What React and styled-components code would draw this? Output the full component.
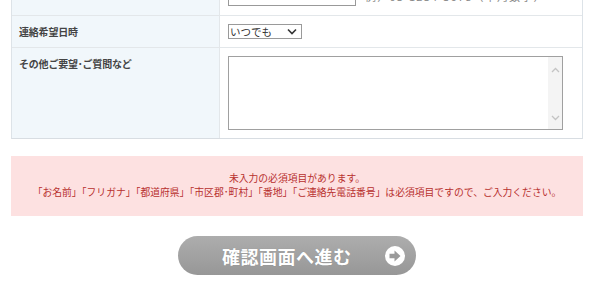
import styled, { createGlobalStyle } from 'styled-components';

const GlobalStyle = createGlobalStyle`
  html, body {
    margin: 0;
    padding: 0;
    background: #fff;
    overflow: hidden;
  }
  body {
    font-family: "Noto Sans CJK JP", "Noto Sans", sans-serif;
    color: #333;
  }
`;

const Page = styled.div`
  padding: 0 17px 0 11px;
  width: 572px;
`;

const FormTable = styled.div`
  margin-top: -26px;
  border: 1px solid #dde3e8;
  border-bottom-color: #d8dde2;
`;

const Row = styled.div`
  display: grid;
  grid-template-columns: 208px 1fr;
  border-top: ${(p) => (p.$first ? 'none' : '1px solid #e3e7ea')};
  min-height: ${(p) => p.$height || 31}px;
`;

const Label = styled.div`
  background: #f1f7fb;
  border-right: 1px solid #e3e7ea;
  padding: ${(p) => (p.$top ? '8px 7px' : '0 7px')};
  display: flex;
  align-items: ${(p) => (p.$top ? 'flex-start' : 'center')};
  font-size: 10px;
  font-weight: bold;
  color: #444;
  letter-spacing: -0.2px;
`;

const Cell = styled.div`
  background: #fff;
  padding: ${(p) => p.$pad || '8px'};
  display: flex;
  align-items: center;
  gap: 9px;
`;

const TextInput = styled.input`
  width: 128px;
  height: 20px;
  box-sizing: border-box;
  border: 1px solid #999;
  margin: 1px 0 0;
`;

const Note = styled.span`
  font-size: 11px;
  letter-spacing: 1.2px;
  color: #888;
  margin-top: 1px;
`;

const SelectWrap = styled.div`
  position: relative;
  width: 74px;
  height: 15px;
`;

const Select = styled.select`
  display: block;
  appearance: none;
  width: 100%;
  height: 15px;
  box-sizing: border-box;
  border: 1px solid #9a9a9a;
  background: #fff;
  font-family: "Noto Sans CJK JP", sans-serif;
  font-size: 10.5px;
  line-height: 13px;
  padding: 0 1px;
  margin: 0;
  color: #333;
  border-radius: 0;
`;

const Chevron = styled.svg`
  position: absolute;
  right: 5px;
  top: 4px;
  pointer-events: none;
`;

const AreaWrap = styled.div`
  position: relative;
  width: 335px;
  height: 74px;
`;

const TextArea = styled.textarea`
  display: block;
  width: 100%;
  height: 100%;
  box-sizing: border-box;
  border: 1px solid #a0a0a0;
  resize: none;
  overflow: hidden;
  margin: 0;
`;

const ScrollBar = styled.div`
  position: absolute;
  right: 1px;
  top: 1px;
  bottom: 1px;
  width: 14px;
  background: #f4f4f4;
  display: flex;
  flex-direction: column;
  justify-content: space-between;
  align-items: center;
  padding: 10px 0 8px;
  box-sizing: border-box;
`;

const ErrorBox = styled.div`
  margin-top: 17px;
  background: #fde1e1;
  padding: 15px 0 17px;
  text-align: center;
  font-size: 9.8px;
  line-height: 14px;
  color: #b8302e;
`;

const ButtonRow = styled.div`
  display: flex;
  justify-content: center;
  margin-top: 20px;
`;

const NextButton = styled.button`
  width: 238px;
  height: 39px;
  border: none;
  border-radius: 20px;
  background: linear-gradient(#adadad, #979797);
  display: flex;
  align-items: center;
  padding: 0 10px 0 44px;
  box-sizing: border-box;
  font-family: "Noto Sans CJK JP", sans-serif;
  font-weight: bold;
  font-size: 18px;
  letter-spacing: 0.5px;
  color: #fff;
  text-shadow: 0 0 1px rgba(0, 0, 0, 0.15);
  cursor: pointer;
`;

const ButtonText = styled.span`
  flex: 1;
  text-align: left;
`;

function App() {
  return (
    <>
      <GlobalStyle />
      <Page>
        <FormTable>
          <Row $first $height={40}>
            <Label />
            <Cell $pad="9px 8px">
              <TextInput />
              <Note>例）03-1234-5678（半角数字）</Note>
            </Cell>
          </Row>
          <Row $height={31}>
            <Label>連絡希望日時</Label>
            <Cell>
              <SelectWrap>
                <Select defaultValue="any">
                  <option value="any">いつでも</option>
                </Select>
                <Chevron width="10" height="7" viewBox="0 0 10 7">
                  <path d="M1 1.5 L5 5.5 L9 1.5" fill="none" stroke="#333" strokeWidth="1.6" />
                </Chevron>
              </SelectWrap>
            </Cell>
          </Row>
          <Row $height={90}>
            <Label $top>その他ご要望･ご質問など</Label>
            <Cell $pad="8px">
              <AreaWrap>
                <TextArea />
                <ScrollBar>
                  <svg width="9" height="6" viewBox="0 0 9 6">
                    <path d="M1 5 L4.5 1.5 L8 5" fill="none" stroke="#c4c4c4" strokeWidth="1.3" />
                  </svg>
                  <svg width="9" height="6" viewBox="0 0 9 6">
                    <path d="M1 1 L4.5 4.5 L8 1" fill="none" stroke="#c4c4c4" strokeWidth="1.3" />
                  </svg>
                </ScrollBar>
              </AreaWrap>
            </Cell>
          </Row>
        </FormTable>

        <ErrorBox>
          未入力の必須項目があります。
          <br />
          「お名前」「フリガナ」「都道府県」「市区郡･町村」「番地」「ご連絡先電話番号」は必須項目ですので、ご入力ください。
        </ErrorBox>

        <ButtonRow>
          <NextButton type="button">
            <ButtonText>確認画面へ進む</ButtonText>
            <svg width="22" height="22" viewBox="0 0 22 22">
              <circle cx="11" cy="11" r="10" fill="#fff" />
              <path d="M5.5 8.8 H10.5 V5.5 L16.5 11 L10.5 16.5 V13.2 H5.5 Z" fill="#9a9a9a" />
            </svg>
          </NextButton>
        </ButtonRow>
      </Page>
    </>
  );
}

export default App;
